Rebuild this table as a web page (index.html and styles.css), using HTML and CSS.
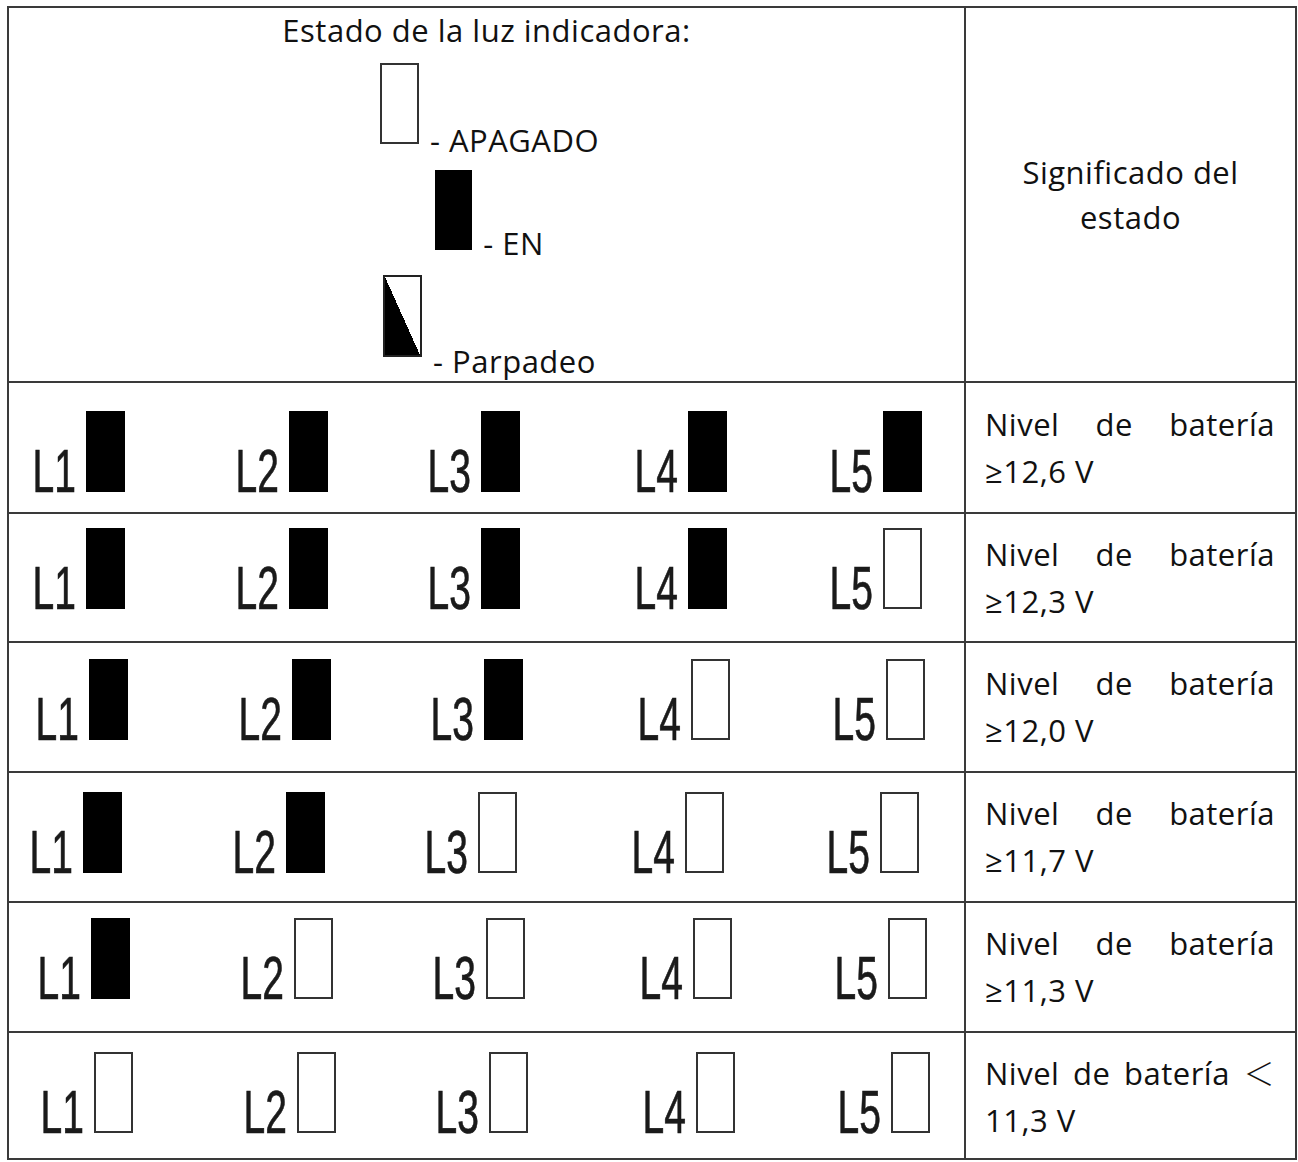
FILE: index.html
```html
<!DOCTYPE html>
<html lang="es">
<head>
<meta charset="utf-8">
<title>Estado de la luz indicadora</title>
<link rel="stylesheet" href="styles.css">
</head>
<body>
<table class="status-table">
  <colgroup><col class="col-leds"><col class="col-meaning"></colgroup>
  <tr class="head-row">
    <th class="legend-cell">
      <div class="legend-title">Estado de la luz indicadora:</div>
      <div class="legend-item li-1"><span class="led off"></span><span class="legend-text">- APAGADO</span></div>
      <div class="legend-item li-2"><span class="led on"></span><span class="legend-text">- EN</span></div>
      <div class="legend-item li-3"><span class="led blink"></span><span class="legend-text">- Parpadeo</span></div>
    </th>
    <th class="meaning-head">Significado del<br>estado</th>
  </tr>
  <tr class="led-row r1">
    <td class="leds-cell"><div class="leds">
      <div class="led-group"><span class="lab"><span>L1</span></span><span class="led on"></span></div>
      <div class="led-group"><span class="lab"><span>L2</span></span><span class="led on"></span></div>
      <div class="led-group"><span class="lab"><span>L3</span></span><span class="led on"></span></div>
      <div class="led-group"><span class="lab"><span>L4</span></span><span class="led on"></span></div>
      <div class="led-group"><span class="lab"><span>L5</span></span><span class="led on"></span></div>
    </div></td>
    <td class="meaning">Nivel de batería <span class="nw">≥12,6 V</span></td>
  </tr>
  <tr class="led-row r2">
    <td class="leds-cell"><div class="leds">
      <div class="led-group"><span class="lab"><span>L1</span></span><span class="led on"></span></div>
      <div class="led-group"><span class="lab"><span>L2</span></span><span class="led on"></span></div>
      <div class="led-group"><span class="lab"><span>L3</span></span><span class="led on"></span></div>
      <div class="led-group"><span class="lab"><span>L4</span></span><span class="led on"></span></div>
      <div class="led-group"><span class="lab"><span>L5</span></span><span class="led off"></span></div>
    </div></td>
    <td class="meaning">Nivel de batería <span class="nw">≥12,3 V</span></td>
  </tr>
  <tr class="led-row r3">
    <td class="leds-cell"><div class="leds">
      <div class="led-group"><span class="lab"><span>L1</span></span><span class="led on"></span></div>
      <div class="led-group"><span class="lab"><span>L2</span></span><span class="led on"></span></div>
      <div class="led-group"><span class="lab"><span>L3</span></span><span class="led on"></span></div>
      <div class="led-group"><span class="lab"><span>L4</span></span><span class="led off"></span></div>
      <div class="led-group"><span class="lab"><span>L5</span></span><span class="led off"></span></div>
    </div></td>
    <td class="meaning">Nivel de batería <span class="nw">≥12,0 V</span></td>
  </tr>
  <tr class="led-row r4">
    <td class="leds-cell"><div class="leds">
      <div class="led-group"><span class="lab"><span>L1</span></span><span class="led on"></span></div>
      <div class="led-group"><span class="lab"><span>L2</span></span><span class="led on"></span></div>
      <div class="led-group"><span class="lab"><span>L3</span></span><span class="led off"></span></div>
      <div class="led-group"><span class="lab"><span>L4</span></span><span class="led off"></span></div>
      <div class="led-group"><span class="lab"><span>L5</span></span><span class="led off"></span></div>
    </div></td>
    <td class="meaning">Nivel de batería <span class="nw">≥11,7 V</span></td>
  </tr>
  <tr class="led-row r5">
    <td class="leds-cell"><div class="leds">
      <div class="led-group"><span class="lab"><span>L1</span></span><span class="led on"></span></div>
      <div class="led-group"><span class="lab"><span>L2</span></span><span class="led off"></span></div>
      <div class="led-group"><span class="lab"><span>L3</span></span><span class="led off"></span></div>
      <div class="led-group"><span class="lab"><span>L4</span></span><span class="led off"></span></div>
      <div class="led-group"><span class="lab"><span>L5</span></span><span class="led off"></span></div>
    </div></td>
    <td class="meaning">Nivel de batería <span class="nw">≥11,3 V</span></td>
  </tr>
  <tr class="led-row r6">
    <td class="leds-cell"><div class="leds">
      <div class="led-group"><span class="lab"><span>L1</span></span><span class="led off"></span></div>
      <div class="led-group"><span class="lab"><span>L2</span></span><span class="led off"></span></div>
      <div class="led-group"><span class="lab"><span>L3</span></span><span class="led off"></span></div>
      <div class="led-group"><span class="lab"><span>L4</span></span><span class="led off"></span></div>
      <div class="led-group"><span class="lab"><span>L5</span></span><span class="led off"></span></div>
    </div></td>
    <td class="meaning">Nivel de batería <span class="lt">＜</span> <span class="nw">11,3 V</span></td>
  </tr>
</table>
</body>
</html>
```
FILE: styles.css
```css
* { box-sizing: border-box; }
html, body { margin: 0; padding: 0; background: #fff; }
body { font-family: "Open Sans", Lato, "Noto Sans", sans-serif; color: #111; }

.status-table {
  border-collapse: collapse;
  table-layout: fixed;
  margin: 6px 0 0 7px;
  width: 1288px;
}
.col-leds { width: 957px; }
.col-meaning { width: 331px; }

.status-table th,
.status-table td {
  border: 2px solid #3a3a3a;
  padding: 0;
  font-weight: normal;
}

.head-row { height: 375px; }
.status-table .legend-cell { vertical-align: top; padding-top: 5px; }
.legend-title {
  font-size: 31px;
  letter-spacing: 0.5px;
  line-height: 35px;
  text-align: center;
}
.legend-item {
  font-size: 31px;
  letter-spacing: 0.5px;
  line-height: 35px;
  text-align: center;
  padding-left: 6px;
}
.legend-item .led { display: inline-block; vertical-align: baseline; margin-right: 11px; }
.li-1 { margin-top: 15px; }
.li-1 .led { margin-bottom: 8px; }
.li-2 { margin-top: 12px; }
.li-2 .led { margin-bottom: 5px; height: 80px; width: 37px; }
.li-3 { margin-top: 14px; }
.li-3 .led { margin-bottom: 16px; height: 82px; }

.status-table .meaning-head {
  font-size: 31px;
  letter-spacing: 0.5px;
  line-height: 45px;
  text-align: center;
  vertical-align: middle;
}

.led {
  display: block;
  width: 39px;
  height: 81px;
  flex: none;
}
.led.on { background: #000; }
.led.off { border: 2px solid #333; background: #fff; }
.led.blink {
  border: 2px solid #222;
  background: linear-gradient(to top right, #000 50%, #fff 50%);
}

.r1 { height: 131px; }
.r2 { height: 129px; }
.r3 { height: 130px; }
.r4 { height: 130px; }
.r5 { height: 130px; }
.r6 { height: 127px; }

.status-table .leds-cell { vertical-align: top; }
.leds {
  display: grid;
  grid-template-columns: 203px 192px 207px 195px 1fr;
}
.r1 .leds { padding: 28px 0 0 21px; }
.r2 .leds { padding: 14px 0 0 21px; }
.r3 .leds { padding: 16px 0 0 24px; }
.r4 .leds { padding: 19px 0 0 18px; }
.r5 .leds { padding: 15px 0 0 26px; }
.r6 .leds { padding: 19px 0 0 29px; }

.led-group { display: flex; align-items: flex-end; }
.lab {
  display: flex;
  justify-content: flex-end;
  width: 46px;
  margin-right: 10px;
  flex: none;
}
.lab span {
  display: block;
  font-family: "Liberation Sans", Arial, sans-serif;
  font-size: 61px;
  line-height: 42px;
  color: #1a1a1a;
  -webkit-text-stroke: 0.7px #1a1a1a;
  transform: scaleX(0.64);
  transform-origin: right bottom;
  white-space: nowrap;
}

.status-table .meaning {
  font-size: 31px;
  letter-spacing: 0.5px;
  line-height: 47px;
  text-align: justify;
  vertical-align: middle;
  padding: 0 20px 0 19px;
}
.nw { white-space: nowrap; }
.lt { font-family: "Noto Sans CJK SC", sans-serif; font-weight: 300; }
```
